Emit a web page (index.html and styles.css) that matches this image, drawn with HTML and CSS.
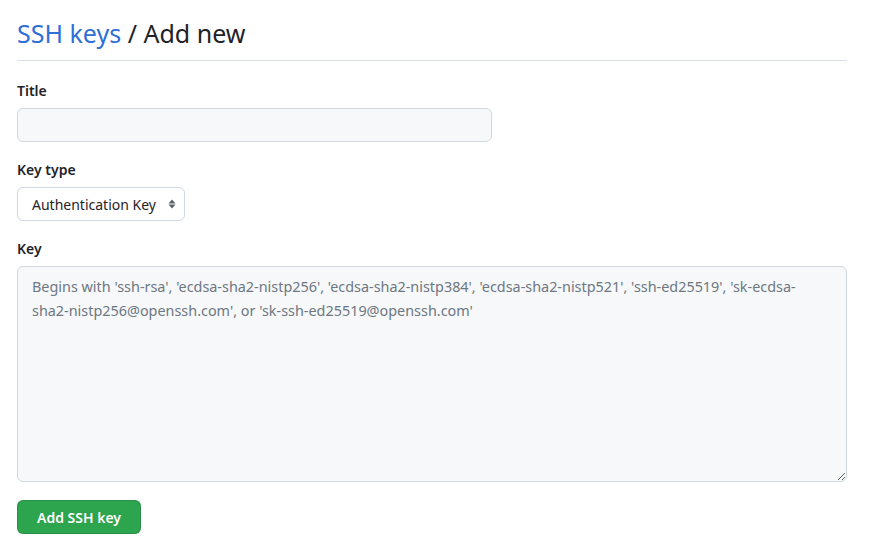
FILE: index.html
```html
<!DOCTYPE html>
<html>
<head>
<meta charset="utf-8">
<link rel="stylesheet" href="styles.css">
</head>
<body>
<div class="page">
  <div class="subhead">
    <h1 class="subhead-heading"><a class="crumb" href="#">SSH keys</a> / Add new</h1>
  </div>
  <form class="form">
    <div class="group">
      <label class="label">Title</label>
      <input class="input title-input" type="text">
    </div>
    <div class="group">
      <label class="label">Key type</label>
      <div class="select">
        <span class="select-text">Authentication Key</span>
        <svg class="select-caret" width="8" height="12" viewBox="0 0 8 12"><path d="M4 1.5 7.5 5.5H0.5Z" fill="#57606a"/><path d="M4 10.5 7.5 6.5H0.5Z" fill="#57606a"/></svg>
      </div>
    </div>
    <div class="group">
      <label class="label">Key</label>
      <textarea class="input key-area" placeholder="Begins with 'ssh-rsa', 'ecdsa-sha2-nistp256', 'ecdsa-sha2-nistp384', 'ecdsa-sha2-nistp521', 'ssh-ed25519', 'sk-ecdsa-sha2-nistp256@openssh.com', or 'sk-ssh-ed25519@openssh.com'"></textarea>
    </div>
    <div class="actions">
      <button class="btn-primary" type="button">Add SSH key</button>
    </div>
  </form>
</div>
</body>
</html>
```

FILE: styles.css
```css
* { box-sizing: border-box; }
body {
  margin: 0;
  background: #ffffff;
  color: #1f2328;
  font-family: "Noto Sans", "Open Sans", sans-serif;
  font-size: 14px;
  line-height: 1.5;
}
.page {
  width: 864px;
  padding: 16px 17px 0 17px;
}
.subhead {
  border-bottom: 1px solid #d8dee4;
  padding-bottom: 10px;
  margin-bottom: 19px;
}
.subhead-heading {
  margin: 0;
  font-size: 25px;
  font-weight: 400;
  line-height: 34px;
  color: #1f2328;
}
.crumb {
  color: #2f6fd8;
  text-decoration: none;
}
.form {
  display: flex;
  flex-direction: column;
}
.group {
  display: flex;
  flex-direction: column;
  align-items: flex-start;
  margin-bottom: 17px;
}
.label {
  font-weight: 600;
  font-size: 14px;
  line-height: 21px;
  margin-bottom: 7px;
}
.input {
  font-family: inherit;
  font-size: 14px;
  background: #f6f8fa;
  border: 1px solid #d0d7de;
  border-radius: 6px;
  color: #1f2328;
  outline: none;
}
.title-input {
  width: 475px;
  height: 34px;
  padding: 5px 12px;
}
.select {
  display: flex;
  align-items: center;
  height: 34px;
  width: 168px;
  padding: 0 8px 0 14px;
  border: 1px solid #d0d7de;
  border-radius: 6px;
  background: #ffffff;
  justify-content: space-between;
}
.select-text {
  font-size: 14px;
  color: #1f2328;
}
.select-caret { margin-left: 8px; }
.key-area {
  width: 830px;
  height: 216px;
  padding: 8px 14px;
  font-size: 14.4px;
  line-height: 24px;
  resize: vertical;
}
.key-area::placeholder {
  color: #6e7781;
}
.actions {
  margin-top: 1px;
}
.btn-primary {
  font-family: inherit;
  font-size: 14px;
  font-weight: 600;
  color: #ffffff;
  background: #2da44e;
  border: 1px solid rgba(27,31,36,0.15);
  border-radius: 6px;
  height: 34px;
  width: 124px;
  padding: 0 16px;
}
```
